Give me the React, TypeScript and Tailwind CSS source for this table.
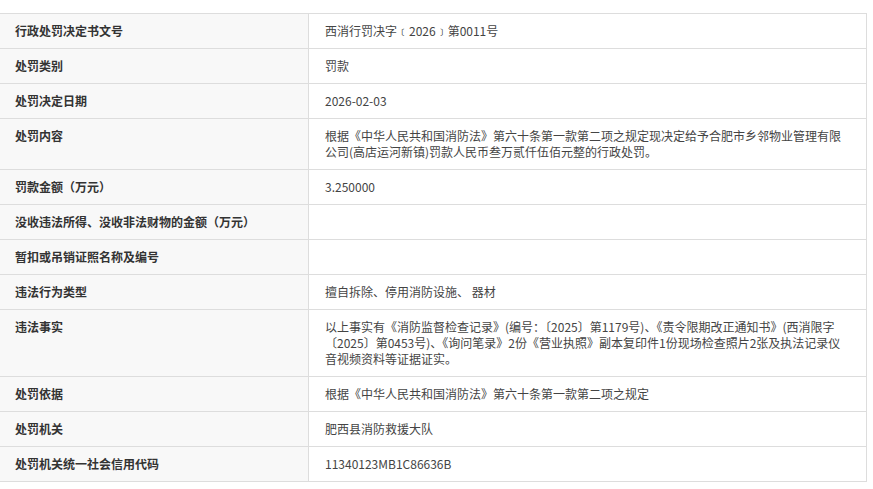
import React from "react";

type Row = { label: string; value: React.ReactNode };

const rows: Row[] = [
  { label: "行政处罚决定书文号", value: "西消行罚决字﹝2026﹞第0011号" },
  { label: "处罚类别", value: "罚款" },
  { label: "处罚决定日期", value: "2026-02-03" },
  {
    label: "处罚内容",
    value: (
      <>
        根据《中华人民共和国消防法》第六十条第一款第二项之规定现决定给予合肥市乡邻物业管理有限
        <br />
        公司(高店运河新镇)罚款人民币叁万贰仟伍佰元整的行政处罚。
      </>
    ),
  },
  { label: "罚款金额（万元）", value: "3.250000" },
  { label: "没收违法所得、没收非法财物的金额（万元）", value: "" },
  { label: "暂扣或吊销证照名称及编号", value: "" },
  { label: "违法行为类型", value: "擅自拆除、停用消防设施、 器材" },
  {
    label: "违法事实",
    value: (
      <>
        以上事实有《消防监督检查记录》(编号：〔2025〕第1179号)、《责令限期改正通知书》(西消限字
        <br />
        〔2025〕第0453号)、《询问笔录》2份《营业执照》副本复印件1份现场检查照片2张及执法记录仪
        <br />
        音视频资料等证据证实。
      </>
    ),
  },
  { label: "处罚依据", value: "根据《中华人民共和国消防法》第六十条第一款第二项之规定" },
  { label: "处罚机关", value: "肥西县消防救援大队" },
  { label: "处罚机关统一社会信用代码", value: "11340123MB1C86636B" },
];

export default function App() {
  return (
    <div
      className="w-[873px] h-[489px] bg-white pt-[13px] overflow-hidden"
      style={{ fontFamily: '"Noto Sans CJK SC", "Noto Sans", sans-serif' }}
    >
      <div className="w-[867px] border-t border-r border-[#dddddd] text-[12px] leading-[16px]">
        {rows.map((r, i) => (
          <div key={i} className="flex border-b border-[#dddddd]">
            <div className="w-[309px] shrink-0 bg-[#f8f8f8] border-r border-[#dddddd] pl-[15px] pr-[10px] py-[9px] font-bold text-[#333333] whitespace-nowrap">
              {r.label}
            </div>
            <div className="flex-1 pl-[16px] pr-[10px] py-[9px] text-[#444444] whitespace-nowrap">
              {r.value}
            </div>
          </div>
        ))}
      </div>
    </div>
  );
}
